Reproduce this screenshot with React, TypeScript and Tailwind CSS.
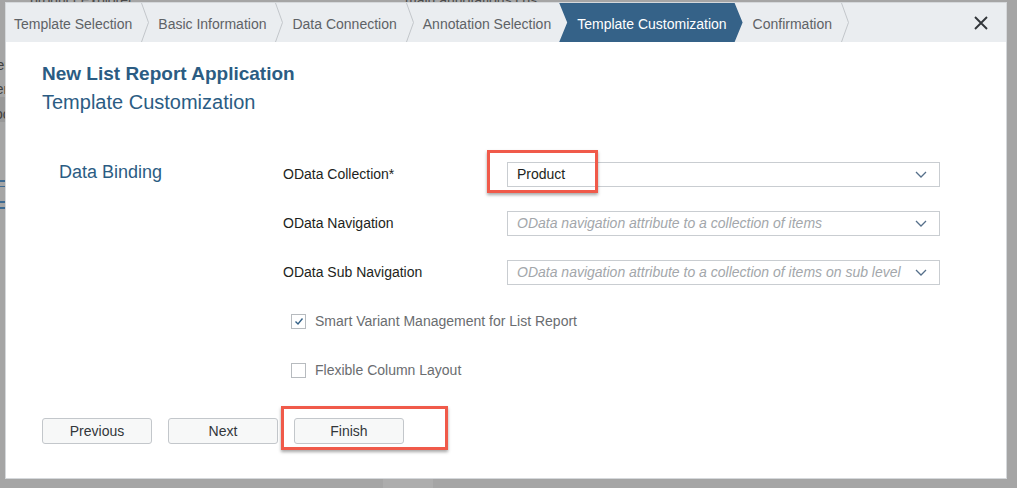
import React from "react";

const font = { fontFamily: '"Liberation Sans", Arial, sans-serif' };

function Chevron() {
  return (
    <svg width="8" height="39" viewBox="0 0 8 39" className="shrink-0">
      <polyline points="0.5,0 7.5,19.5 0.5,39" fill="none" stroke="#c2c6ca" strokeWidth="1" />
    </svg>
  );
}

function DropIcon() {
  return (
    <svg width="12" height="7" viewBox="0 0 12 7">
      <polyline points="1,1 6,6 11,1" fill="none" stroke="#556f8a" strokeWidth="1.3" />
    </svg>
  );
}

function Select({ value, placeholder }: { value?: string; placeholder?: string }) {
  return (
    <div className="flex h-[25px] w-[433px] items-center border border-[#c9cdd1] bg-white">
      <div className="min-w-0 flex-1 overflow-hidden whitespace-nowrap pl-[9px] text-[14px]">
        {value ? (
          <span className="text-[#1d1f21]">{value}</span>
        ) : (
          <span className="italic text-[#a3a7ab]">{placeholder}</span>
        )}
      </div>
      <div className="flex w-[34px] shrink-0 items-center justify-center pr-[2px]">
        <DropIcon />
      </div>
    </div>
  );
}

function CheckRow({ label, checked }: { label: string; checked?: boolean }) {
  return (
    <div className="flex h-[25px] items-center pl-[8px]">
      <div className="flex h-[15px] w-[15px] items-center justify-center border border-[#b7bbbf] bg-white">
        {checked && (
          <svg width="10" height="9" viewBox="0 0 10 9">
            <polyline points="1.5,4.5 4,7 8.5,1.5" fill="none" stroke="#356288" strokeWidth="1.4" />
          </svg>
        )}
      </div>
      <span className="ml-[9px] text-[14px] text-[#6a6d70]">{label}</span>
    </div>
  );
}

function Button({ children }: { children: React.ReactNode }) {
  return (
    <button className="h-[26px] w-[110px] rounded-[3px] border border-[#c3c7cb] bg-[#f7f8f8] text-[14px] text-[#32363a]">
      {children}
    </button>
  );
}

export default function App() {
  return (
    <div className="relative h-[488px] w-[1017px] overflow-hidden bg-[#a5a5a5]" style={font}>
      {/* page behind the overlay */}
      <div className="absolute left-[30px] top-[-10px] text-[14px] text-[#4a4a4a]">product Explorer</div>
      <div className="absolute left-[405px] top-[-10px] text-[14px] text-[#4a4a4a]">main annotations.cds</div>
      <div className="absolute left-0 top-[97px] h-[25px] w-[20px] bg-[#989898]" />
      <div className="absolute left-[-12px] top-[55px] text-[14px] text-[#3f3f3f]">Vendor</div>
      <div className="absolute left-[-12px] top-[79px] text-[14px] text-[#3f3f3f]">Item</div>
      <div className="absolute left-[-12px] top-[104px] text-[14px] text-[#3f3f3f]">Tool</div>
      <div className="absolute left-[-4px] top-[180px] h-[2px] w-[10px] bg-[#3d6a92]" />
      <div className="absolute left-[-4px] top-[186px] h-[1px] w-[10px] bg-[#3d6a92]" />
      <div className="absolute left-[-4px] top-[201px] h-[2px] w-[10px] bg-[#3d6a92]" />
      <div className="absolute left-[-4px] top-[207px] h-[2px] w-[10px] bg-[#3d6a92]" />
      <div className="absolute bottom-0 left-[383px] h-[10px] w-[50px] bg-[#adadad]" />

      <div className="relative ml-[6px] mt-[3px] flex h-[475px] w-[1000px] flex-col bg-white shadow-[0_0_0_1px_#d5d8db]">
        {/* wizard steps */}
        <div className="flex h-[39px] shrink-0 items-stretch bg-[#eaedf0] text-[14px] text-[#5e6266]">
          <span className="flex items-center pl-[8px] pt-[4px]">Template Selection</span>
          <span className="ml-[9px] flex"><Chevron /></span>
          <span className="ml-[9px] flex items-center pt-[4px]">Basic Information</span>
          <span className="ml-[9px] flex"><Chevron /></span>
          <span className="ml-[9px] flex items-center pt-[4px]">Data Connection</span>
          <span className="ml-[9px] flex"><Chevron /></span>
          <span className="ml-[9px] flex items-center pt-[4px]">Annotation Selection</span>
          <span
            className="ml-[8px] flex items-center bg-[#356288] pl-[18px] pr-[16px] pt-[4px] text-white"
            style={{ clipPath: "polygon(0 0, calc(100% - 8px) 0, 100% 50%, calc(100% - 8px) 100%, 0 100%, 8px 50%)" }}
          >
            Template Customization
          </span>
          <span className="ml-[10px] flex items-center pt-[4px]">Confirmation</span>
          <span className="ml-[9px] flex"><Chevron /></span>
          <button className="ml-auto mr-[18px] flex items-center">
            <svg width="14" height="14" viewBox="0 0 14 14">
              <path d="M1 1 L13 13 M13 1 L1 13" stroke="#32363a" strokeWidth="1.9" />
            </svg>
          </button>
        </div>

        <div className="flex flex-col pl-[36px]">
          <div className="mt-[20px] text-[19px] font-bold leading-[24px] text-[#2b5c83]">New List Report Application</div>
          <div className="mt-[3px] text-[20px] leading-[26px] text-[#2b5c83]">Template Customization</div>

          {/* form */}
          <div className="mt-[45px] flex">
            <div className="ml-[17px] w-[224px] text-[18px] leading-[24px] text-[#2b5c83]">Data Binding</div>
            <div className="flex flex-col pt-[2px]">
              <div className="flex flex-col gap-[24px]">
                <div className="flex items-center">
                  <span className="w-[224px] text-[14px] text-[#1d1f21]">OData Collection*</span>
                  <Select value="Product" />
                </div>
                <div className="flex items-center">
                  <span className="w-[224px] text-[14px] text-[#1d1f21]">OData Navigation</span>
                  <Select placeholder="OData navigation attribute to a collection of items" />
                </div>
                <div className="flex items-center">
                  <span className="w-[224px] text-[14px] text-[#1d1f21]">OData Sub Navigation</span>
                  <Select placeholder="OData navigation attribute to a collection of items on sub level" />
                </div>
              </div>
              <div className="mt-[24px] flex flex-col gap-[24px]">
                <CheckRow label="Smart Variant Management for List Report" checked />
                <CheckRow label="Flexible Column Layout" />
              </div>
            </div>
          </div>

          <div className="mt-[35px] flex gap-[16px]">
            <Button>Previous</Button>
            <Button>Next</Button>
            <Button>Finish</Button>
          </div>
        </div>
      </div>

      {/* highlight marks */}
      <div className="absolute left-[487px] top-[150px] h-[43px] w-[111px] border-[3px] border-[#f05a4a] shadow-[0_2px_3px_rgba(0,0,0,0.35)]" />
      <div className="absolute left-[281px] top-[406px] h-[44px] w-[167px] border-[3px] border-[#f05a4a] shadow-[0_2px_3px_rgba(0,0,0,0.35)]" />
    </div>
  );
}
